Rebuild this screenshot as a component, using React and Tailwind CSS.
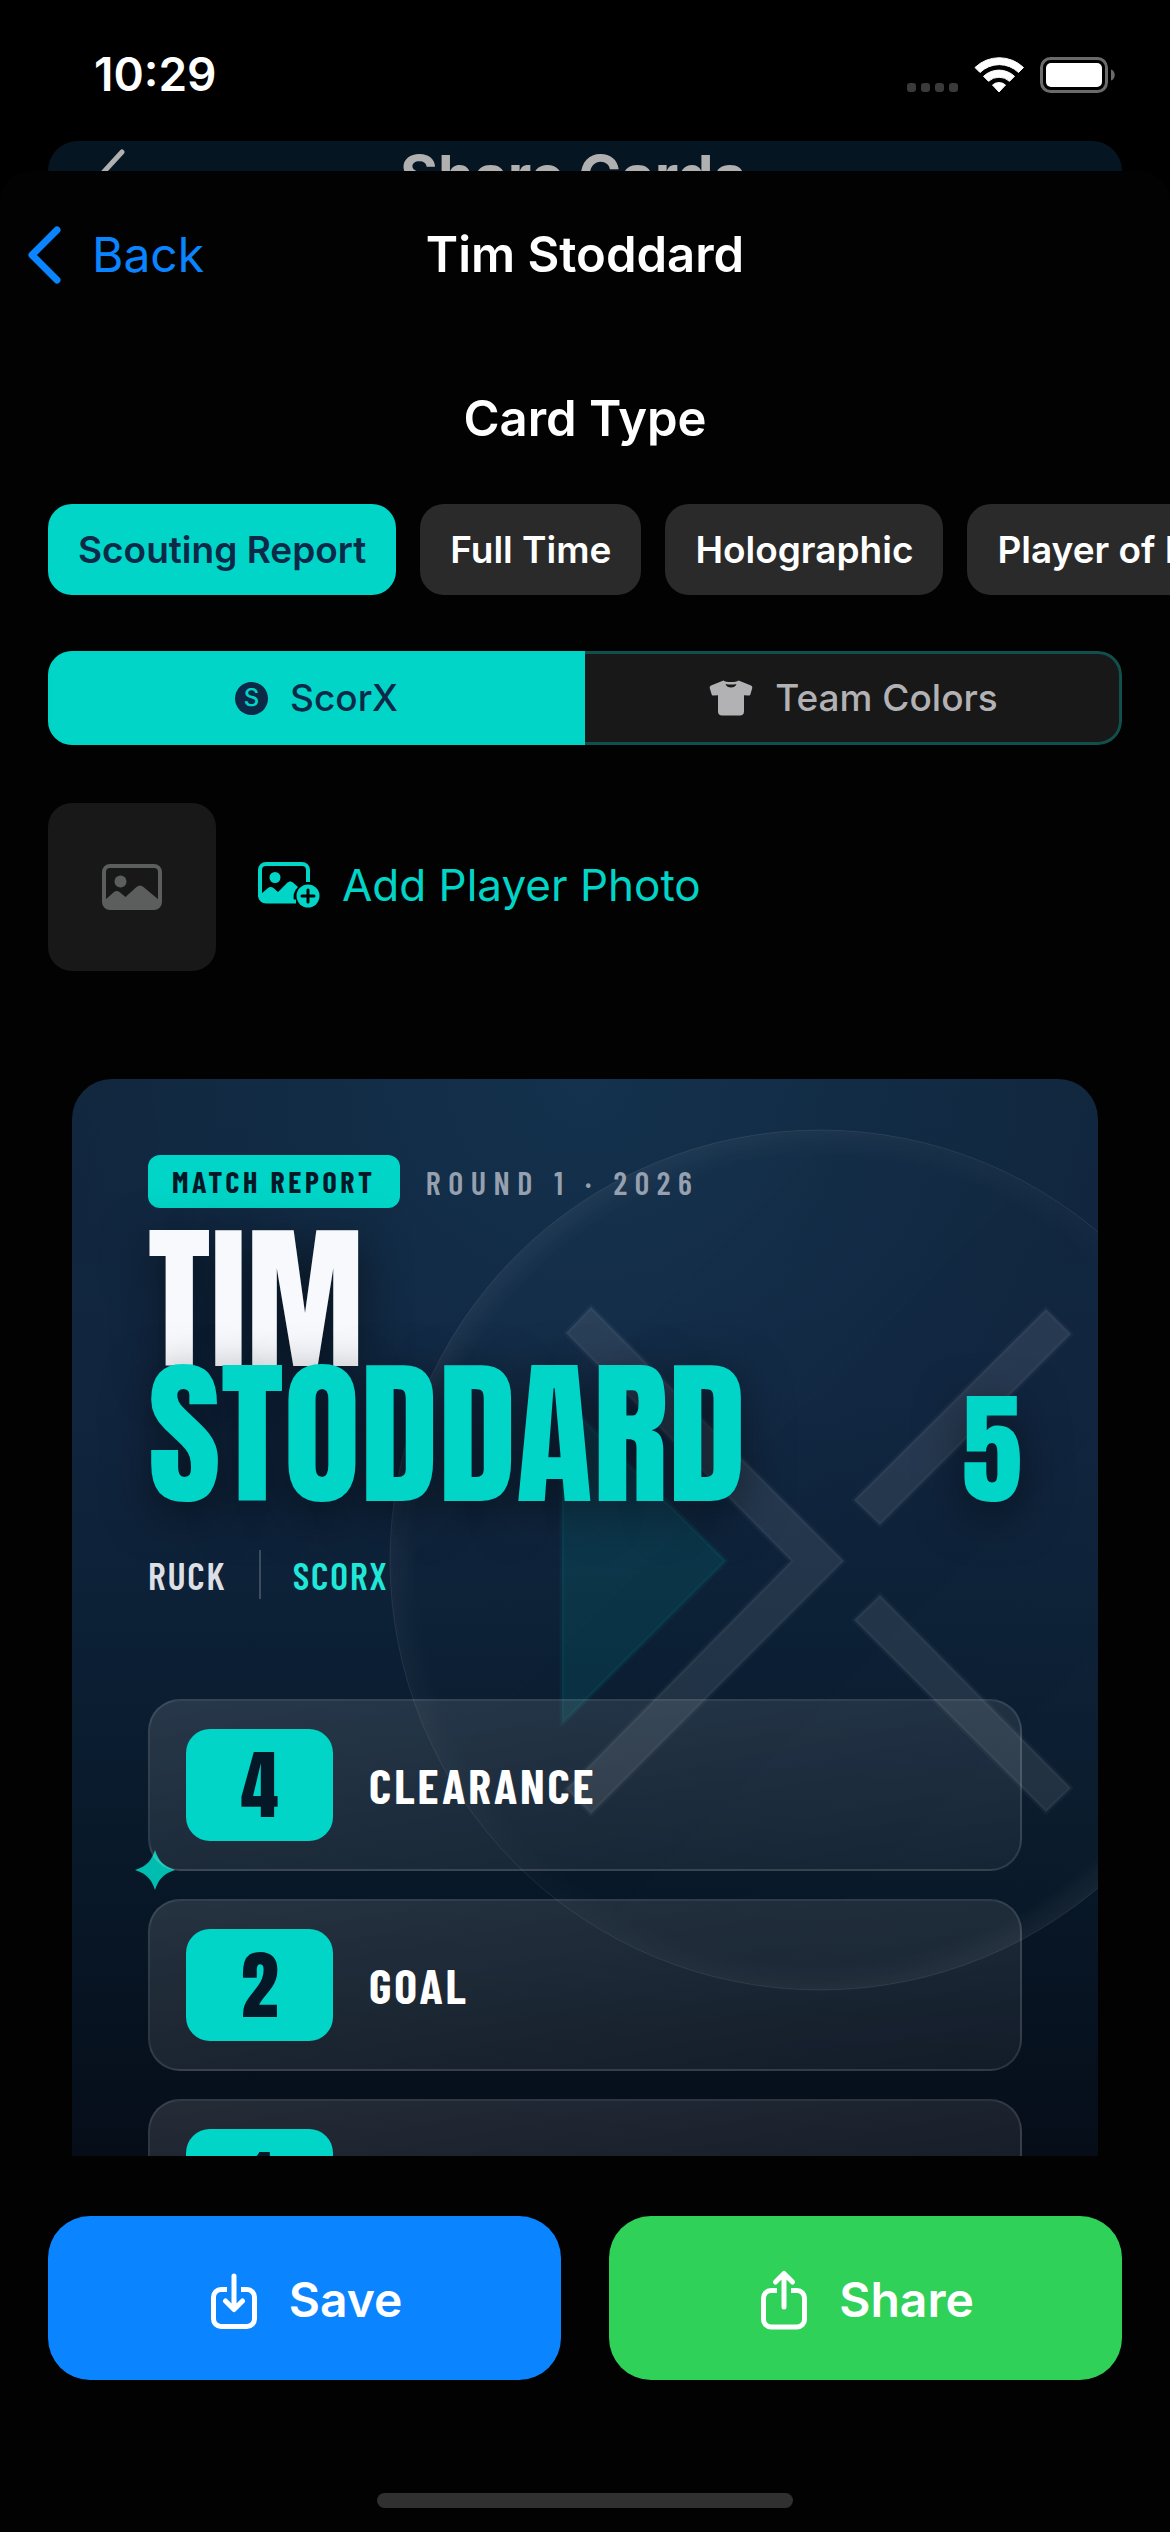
import React, { useState } from 'react';

const cardTypes = ['Scouting Report', 'Full Time', 'Holographic', 'Player of Match'];

const stats = [
  { label: 'CLEARANCE', value: 4 },
  { label: 'GOAL', value: 2 },
  { label: 'MARK', value: 1 },
];

const display = "font-['Anton','Liberation_Sans_Narrow',sans-serif]";
const condensed = "font-['Barlow_Condensed','Roboto_Condensed','Liberation_Sans_Narrow',sans-serif]";

const StatusIcons = () => (
  <svg width="209" height="38" viewBox="0 0 209 38" fill="none" aria-hidden="true">
    {[0, 14, 28, 42].map((x) => (
      <rect key={x} x={x} y="27" width="9" height="9" rx="3" fill="#3a3a3a" />
    ))}
    <path d="M68 11.500a35 35 0 0 1 48.500 0l-5 5a27.500 27.500 0 0 0-38.500 0z" fill="#fff" stroke="#fff" strokeLinejoin="round" />
    <path d="M76.500 20.300a22.500 22.500 0 0 1 31 0l-5 5a15.500 15.500 0 0 0-21 0z" fill="#fff" stroke="#fff" strokeLinejoin="round" />
    <path d="M85.500 29a10 10 0 0 1 13 0L92 36z" fill="#fff" stroke="#fff" strokeLinejoin="round" />
    <rect x="134.500" y="2.500" width="65" height="33" rx="9" stroke="#6b6b6b" strokeWidth="3" />
    <rect x="139" y="7" width="56" height="24" rx="5" fill="#fff" />
    <path d="M204 13.500c5 1.500 5 9.500 0 11z" fill="#6b6b6b" />
  </svg>
);

const PhotoIcon = () => (
  <svg width="60" height="46" viewBox="0 0 60 46" fill="none" aria-hidden="true">
    <rect x="2" y="2" width="56" height="42" rx="6" stroke="currentColor" strokeWidth="4" />
    <circle cx="18.500" cy="17.500" r="6" fill="currentColor" />
    <path d="M3 36l9-8c2-1.500 3.500-1.500 5.500 0l6 5 11-10c2.500-2 4.500-2 7 0L57 36v4a4 4 0 0 1-4 4H7a4 4 0 0 1-4-4z" fill="currentColor" />
  </svg>
);

const AddPhotoIcon = () => (
  <svg width="62" height="46" viewBox="0 0 62 46" fill="none" aria-hidden="true">
    <path d="M38 39.500H8A6 6 0 0 1 2 34V8a6 6 0 0 1 6-6h36a6 6 0 0 1 6 6v12" stroke="currentColor" strokeWidth="4" />
    <circle cx="17" cy="15.500" r="5.500" fill="currentColor" />
    <path d="M3 32l7-6c2-1.500 3.500-1.500 5.500 0l4.500 4 9-9c2.500-2 4-2 6.500 0l4.500 4a14 14 0 0 0-3.500 15H7a4 4 0 0 1-4-4z" fill="currentColor" />
    <circle cx="50" cy="34" r="11.500" fill="currentColor" />
    <path d="M50 28v12M44 34h12" stroke="#020202" strokeWidth="3" strokeLinecap="round" />
  </svg>
);

const ShirtIcon = () => (
  <svg width="44" height="36" viewBox="0 0 44 36" fill="currentColor" aria-hidden="true">
    <path d="M14.500.5C17 2.500 27 2.500 29.500.5L42 5.500c1 .5 1.500 1.500 1.200 2.700L41.500 14c-.3 1.200-1 1.700-2.200 1.600L35 15.300V31.500c0 2.500-1.500 4-4 4H13c-2.500 0-4-1.500-4-4V15.300l-4.300.3c-1.200.1-1.900-.4-2.200-1.600L.8 8.200C.5 7 1 6 2 5.500z" />
    <path d="M16.500 4c3.500.8 7.500.8 11 0-1.300 4.700-9.700 4.700-11 0z" fill="#181818" />
  </svg>
);

const SaveIcon = () => (
  <svg width="46" height="62" viewBox="0 0 46 62" fill="none" stroke="#fff" strokeWidth="5" aria-hidden="true">
    <path d="M16 20.500H10A7.500 7.500 0 0 0 2.500 28v22A7.500 7.500 0 0 0 10 57.500h26a7.500 7.500 0 0 0 7.500-7.500V28a7.500 7.500 0 0 0-7.500-7.500h-6" />
    <path d="M23 7v33M14.500 32l8.500 8.500 8.500-8.500" strokeLinecap="round" strokeLinejoin="round" />
  </svg>
);

const ShareIcon = () => (
  <svg width="46" height="62" viewBox="0 0 46 62" fill="none" stroke="#fff" strokeWidth="5" aria-hidden="true">
    <path d="M16 21.500H10A7.500 7.500 0 0 0 2.500 29v21.500A7.500 7.500 0 0 0 10 58h26a7.500 7.500 0 0 0 7.500-7.500V29a7.500 7.500 0 0 0-7.500-7.500h-6" />
    <path d="M23 38V5M14.500 13L23 4.500l8.500 8.500" strokeLinecap="round" strokeLinejoin="round" />
  </svg>
);

const Watermark = () => (
  <svg
    className="absolute top-[50px] -right-[153px] pointer-events-none"
    width="862"
    height="862"
    viewBox="389 1129 862 862"
    fill="none"
    aria-hidden="true"
  >
    <defs>
      <radialGradient id="rim">
        <stop offset="0.940" stopColor="#fff" stopOpacity="0.015" />
        <stop offset="1" stopColor="#fff" stopOpacity="0.070" />
      </radialGradient>
      <linearGradient id="rimFade" x1="0" y1="0" x2="1" y2="1">
        <stop offset="0.050" stopColor="#fff" />
        <stop offset="0.500" stopColor="#fff" stopOpacity="0.200" />
        <stop offset="0.900" stopColor="#fff" />
      </linearGradient>
      <mask id="rimMask">
        <rect x="389" y="1129" width="862" height="862" fill="url(#rimFade)" />
      </mask>
    </defs>
    <circle cx="820" cy="1560" r="430" fill="url(#rim)" mask="url(#rimMask)" />
    <circle cx="820" cy="1560" r="430" stroke="#fff" strokeOpacity="0.080" />
    <path d="M562 1398v326l164-163z" fill="#00d5c7" fillOpacity="0.110" stroke="#00d5c7" strokeOpacity="0.050" strokeWidth="5" strokeLinejoin="round" />
    <g fill="#fff" fillOpacity="0.095" stroke="#fff" strokeOpacity="0.030" strokeWidth="5" strokeLinejoin="round">
      <path d="M591 1307l253 254-253 253-25-25 225-228-225-228z" />
      <path d="M1046 1309l25 25-191 191-26-25z" />
      <path d="M880 1595l191 193-25 24-192-192z" />
    </g>
  </svg>
);

const StatRow = ({ label, value }) => (
  <li className="relative flex items-center gap-9 px-9 py-7 rounded-[32px] border-2 border-white/10 bg-linear-to-br from-white/12 to-white/5">
    <span className={`w-[147px] h-[112px] shrink-0 flex items-center justify-center rounded-3xl bg-[#00d5c7] text-[#051828] text-[76px] leading-none ${display}`}>
      {value}
    </span>
    <span className={`text-[48px] leading-none font-bold tracking-[0.06em] text-white ${condensed}`}>{label}</span>
  </li>
);

const PlayerCard = () => (
  <article className="relative mx-6 px-[76px] pt-[76px] pb-[76px] rounded-[40px] overflow-hidden bg-[radial-gradient(circle_at_50%_0%,#15385799,transparent_520px),linear-gradient(#11273e,#11253f_320px,#0c2036_540px,#081828_800px,#060d19_1080px)]">
    <Watermark />

    <div className="relative flex items-center gap-[26px]">
      <span className={`h-[53px] px-6 flex items-center rounded-xl bg-[#00d5c7] text-[#051828] text-[30px] font-bold tracking-[0.12em] ${condensed}`}>
        MATCH REPORT
      </span>
      <span className={`text-[32px] leading-none font-semibold tracking-[0.24em] text-[#96a0ae] ${condensed}`}>
        ROUND 1 · 2026
      </span>
    </div>

    <div className={`relative mt-6 flex items-end justify-between [text-shadow:0_12px_48px_#00000080] ${display}`}>
      <h2 className="text-[158px] leading-[135px]">
        <span className="block text-[#f8f9fc]">TIM</span>
        <span className="block text-[#00d5c7]">STODDARD</span>
      </h2>
      <span className="text-[122px] leading-[106px] text-[#00d5c7]">5</span>
    </div>

    <div className={`relative mt-12 flex items-center text-[38px] leading-none font-semibold tracking-wider ${condensed}`}>
      <span className="text-[#dcdfe4]">RUCK</span>
      <span className="mx-8 w-[2px] h-[49px] bg-white/20" />
      <span className="text-[#20e8d8]">SCORX</span>
    </div>

    <div className="relative mt-[100px]">
      <svg className="absolute top-[151px] -left-[13px]" width="40" height="40" viewBox="0 0 40 40" aria-hidden="true">
        <path d="M20 0c3 9 7 16 20 20-13 4-17 11-20 20-3-9-7-16-20-20 13-4 17-11 20-20z" fill="#00bdb0" />
      </svg>
      <ul className="flex flex-col gap-7">
        {stats.map((stat) => (
          <StatRow key={stat.label} {...stat} />
        ))}
      </ul>
    </div>
  </article>
);

const App = () => {
  const [type, setType] = useState('Scouting Report');
  const [theme, setTheme] = useState('scorx');

  const segment = (active) =>
    `flex-1 flex items-center justify-center gap-[22px] font-medium ${
      active ? 'bg-[#00d5c7] text-[#0c2a48]' : 'bg-[#181818] text-[#b2b2b4]'
    }`;

  return (
    <div className="h-screen flex flex-col bg-black text-white overflow-hidden font-['Inter',sans-serif]">
      <div className="h-[141px] shrink-0 flex items-center justify-between pl-[94px] pr-[54px] pt-2">
        <span className="text-[46px] font-semibold">10:29</span>
        <StatusIcons />
      </div>

      {/* Screen underneath the sheet */}
      <div className="relative mx-12 h-[30px] pr-6 shrink-0 overflow-hidden rounded-t-[30px] bg-[#061522] flex justify-center">
        <svg className="absolute left-[48px] top-[8px]" width="30" height="54" viewBox="0 0 30 54" fill="none" aria-hidden="true">
          <path d="M26 3L4 27l22 24" stroke="#b0b0b0" strokeWidth="5" strokeLinecap="round" />
        </svg>
        <span className="text-[58px] leading-[70px] font-bold text-[#b0b0b0]">Share Cards</span>
      </div>

      <div className="flex-1 min-h-0 flex flex-col rounded-t-[30px] bg-[#020202]">
        <header className="h-[168px] shrink-0 grid grid-cols-3 items-center px-7">
          <button className="justify-self-start flex items-center gap-[30px] text-[#0a84ff] text-[48px]">
            <svg width="34" height="58" viewBox="0 0 34 58" fill="none" aria-hidden="true">
              <path d="M29 4L4 29l25 25" stroke="currentColor" strokeWidth="7" strokeLinecap="round" strokeLinejoin="round" />
            </svg>
            Back
          </button>
          <h1 className="justify-self-center whitespace-nowrap text-[49px] font-semibold">Tim Stoddard</h1>
        </header>

        <main className="flex-1 min-h-0 overflow-y-auto [scrollbar-width:none] px-12 pt-[50px] pb-12">
          <h2 className="text-center text-[49px] leading-[60px] font-semibold">Card Type</h2>

          <div className="mt-[55px] -mx-12 px-12 flex gap-6 overflow-x-auto [scrollbar-width:none]">
            {cardTypes.map((name) => (
              <button
                key={name}
                onClick={() => setType(name)}
                className={`h-[91px] px-[30px] shrink-0 rounded-3xl text-[37px] font-semibold whitespace-nowrap ${
                  name === type ? 'bg-[#00d5c7] text-[#0c2a48]' : 'bg-[#2a2a2a] text-white'
                }`}
              >
                {name}
              </button>
            ))}
          </div>

          <div className="relative mt-[56px] h-[94px] flex rounded-3xl overflow-hidden text-[37px]">
            <button onClick={() => setTheme('scorx')} className={segment(theme === 'scorx')}>
              <span className="w-[33px] h-[33px] flex items-center justify-center rounded-full bg-[#0c2a48] text-[#00d5c7] text-[24px] font-medium">
                S
              </span>
              ScorX
            </button>
            <button onClick={() => setTheme('team')} className={segment(theme === 'team')}>
              <ShirtIcon />
              Team Colors
            </button>
            <span className="absolute inset-0 rounded-3xl border-3 border-[#00d5c7]/30 pointer-events-none" />
          </div>

          <div className="mt-[58px] flex items-center gap-[42px]">
            <div className="w-[168px] h-[168px] flex items-center justify-center rounded-3xl bg-[#181818] text-[#5c5d5d]">
              <PhotoIcon />
            </div>
            <button className="flex items-center gap-[22px] pb-1 text-[44px] text-[#00d5c7]">
              <AddPhotoIcon />
              Add Player Photo
            </button>
          </div>

          <div className="mt-[108px]">
            <PlayerCard />
          </div>
        </main>

        <footer className="shrink-0 px-12 pt-[60px] pb-6 flex flex-col items-center">
          <div className="w-full grid grid-cols-2 gap-12 text-[48px] font-semibold">
            <button className="h-[164px] pt-1 pl-1 flex items-center justify-center gap-8 rounded-[42px] bg-[#0a84ff]">
              <SaveIcon />
              Save
            </button>
            <button className="h-[164px] pt-1 pl-1 flex items-center justify-center gap-8 rounded-[42px] bg-[#30d158]">
              <ShareIcon />
              Share
            </button>
          </div>
          <span className="mt-[113px] w-[416px] h-[15px] rounded-full bg-[#303030]" />
        </footer>
      </div>
    </div>
  );
};

export default App;
